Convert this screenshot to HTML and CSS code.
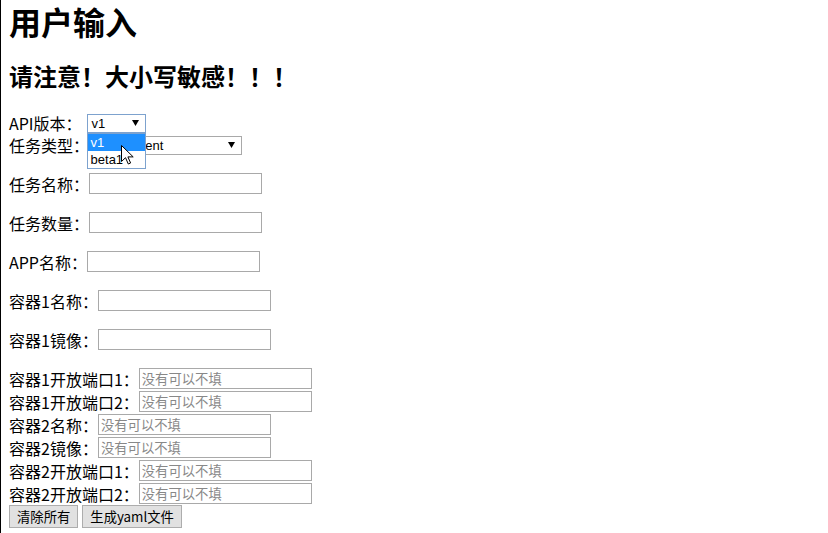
FILE: index.html
```html
<!DOCTYPE html>
<html lang="zh-CN">
<head>
<meta charset="utf-8">
<title>用户输入</title>
<link rel="stylesheet" href="styles.css">
</head>
<body>
<div class="page">
  <h1>用户输入</h1>
  <h2>请注意！大小写敏感！！！</h2>
  <form class="form">
    <div class="row tight">
      <label>API版本<span class="colon">：</span></label>
      <span class="sel-wrap api-wrap">
        <span class="select select-api focused"><span class="sel-text">v1</span><svg class="arrow" width="7" height="6" viewBox="0 0 7 6"><path d="M0 0H7L3.5 6Z" fill="#000"/></svg></span>
        <span class="dropdown">
          <span class="opt active">v1</span>
          <span class="opt">beta1</span>
        </span>
      </span>
    </div>
    <div class="row tight">
      <label>任务类型<span class="colon">：</span></label>
      <span class="select select-type"><span class="sel-text">Deployment</span><svg class="arrow" width="7" height="6" viewBox="0 0 7 6"><path d="M0 0H7L3.5 6Z" fill="#000"/></svg></span>
    </div>
    <div class="row gap"><label>任务名称<span class="colon">：</span></label><input class="txt" type="text"></div>
    <div class="row gap"><label>任务数量<span class="colon">：</span></label><input class="txt" type="text"></div>
    <div class="row gap"><label>APP名称<span class="colon">：</span></label><input class="txt" type="text"></div>
    <div class="row gap"><label>容器1名称<span class="colon">：</span></label><input class="txt" type="text"></div>
    <div class="row gap"><label>容器1镜像<span class="colon">：</span></label><input class="txt" type="text"></div>
    <div class="row gap"><label>容器1开放端口1<span class="colon">：</span></label><input class="txt" type="text" placeholder="没有可以不填"></div>
    <div class="row"><label>容器1开放端口2<span class="colon">：</span></label><input class="txt" type="text" placeholder="没有可以不填"></div>
    <div class="row"><label>容器2名称<span class="colon">：</span></label><input class="txt" type="text" placeholder="没有可以不填"></div>
    <div class="row"><label>容器2镜像<span class="colon">：</span></label><input class="txt" type="text" placeholder="没有可以不填"></div>
    <div class="row"><label>容器2开放端口1<span class="colon">：</span></label><input class="txt" type="text" placeholder="没有可以不填"></div>
    <div class="row"><label>容器2开放端口2<span class="colon">：</span></label><input class="txt" type="text" placeholder="没有可以不填"></div>
    <div class="row buttons">
      <button type="button" class="btn">清除所有</button>
      <button type="button" class="btn">生成yaml文件</button>
    </div>
  </form>
  <svg class="cursor" width="13" height="20" viewBox="0 0 13 20"><path d="M0.5 0.5V16.5L4.5 12.7L7.3 19L9.6 18L6.9 11.9H12.2Z" fill="#fff" stroke="#000" stroke-width="1" stroke-linejoin="miter"/></svg>
</div>
</body>
</html>
```

FILE: styles.css
```css
html, body {
  margin: 0;
  padding: 0;
  background: #fff;
}

body {
  font-family: "Noto Sans CJK SC", "Noto Sans", sans-serif;
  color: #000;
  text-spacing-trim: space-all;
}

.page {
  position: relative;
  box-sizing: border-box;
  min-height: 533px;
  border-left: 1px solid #000;
  padding: 0 8px;
}

h1 {
  margin: 0;
  font-size: 32px;
  line-height: 42px;
  font-weight: 700;
}

h2 {
  margin: 18px 0 0;
  font-size: 24px;
  line-height: 32px;
  font-weight: 700;
}

.form {
  margin-top: 20px;
  font-size: 16px;
}

.row {
  display: flex;
  align-items: center;
  height: 23px;
}

.row.tight {
  height: 22px;
}

.row.gap {
  margin-top: 16px;
}

.row label {
  white-space: nowrap;
}

.colon {
  font-family: "Noto Sans CJK TC", "Noto Sans CJK SC", sans-serif;
}

.txt {
  box-sizing: border-box;
  width: 173px;
  height: 21px;
  margin: 0;
  padding: 1px 2px;
  border: 1px solid #a9a9a9;
  background: #fff;
  font-family: "Noto Sans CJK SC", sans-serif;
  font-size: 13.33px;
  outline: none;
}

.txt::placeholder {
  color: #888;
}

.sel-wrap {
  position: relative;
  display: inline-flex;
}

.api-wrap {
  margin-left: 5px;
}

.select {
  box-sizing: border-box;
  display: inline-flex;
  align-items: center;
  justify-content: space-between;
  height: 19px;
  padding: 0 6px 0 4px;
  border: 1px solid #a9a9a9;
  background: #fff;
  font-family: "Liberation Sans", Arial, sans-serif;
  font-size: 13px;
  overflow: hidden;
  white-space: nowrap;
}

.select-api {
  width: 59px;
}

.select-type {
  width: 153px;
}

.select.focused {
  border-color: #7da2ce;
}

.arrow {
  flex: none;
}

.dropdown {
  position: absolute;
  left: 0;
  top: 100%;
  z-index: 2;
  box-sizing: border-box;
  width: 59px;
  display: flex;
  flex-direction: column;
  border: 1px solid #7da2ce;
  background: #fff;
  font-family: "Liberation Sans", Arial, sans-serif;
  font-size: 13px;
}

.opt {
  height: 17px;
  line-height: 17px;
  padding-left: 3px;
}

.opt.active {
  background: #1e90ff;
  color: #fff;
}

.buttons {
  margin-top: -1px;
  height: 24px;
  gap: 4px;
}

.btn {
  box-sizing: border-box;
  height: 23px;
  margin: 0;
  padding: 0 7px;
  border: 1px solid #adadad;
  background: #e1e1e1;
  color: #000;
  font-family: "Noto Sans CJK SC", sans-serif;
  font-size: 13.33px;
  line-height: 19px;
}

.cursor {
  position: absolute;
  left: 120px;
  top: 145px;
  z-index: 3;
}
```
